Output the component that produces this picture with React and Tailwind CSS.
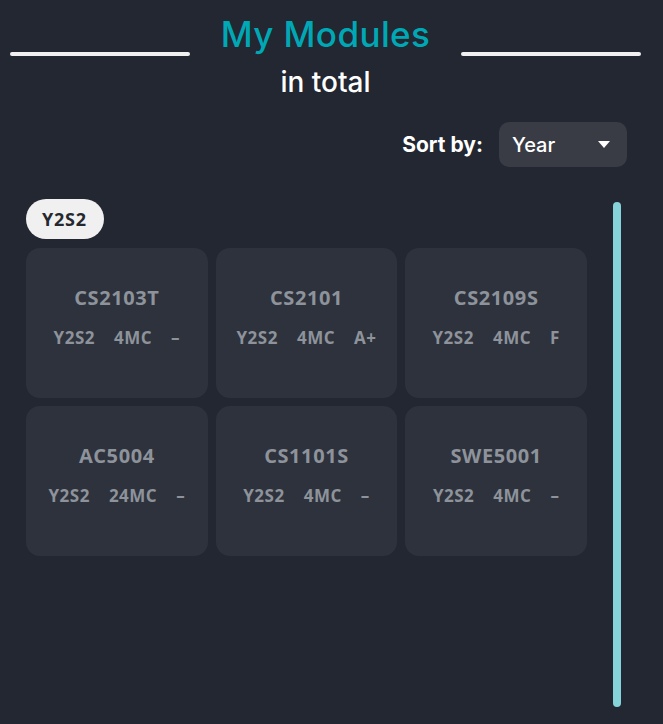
import React from "react";

const mods = [
  { code: "CS2103T", mc: "4MC", grade: "–" },
  { code: "CS2101", mc: "4MC", grade: "A+" },
  { code: "CS2109S", mc: "4MC", grade: "F" },
  { code: "AC5004", mc: "24MC", grade: "–" },
  { code: "CS1101S", mc: "4MC", grade: "–" },
  { code: "SWE5001", mc: "4MC", grade: "–" },
];

export default function App() {
  return (
    <div className="w-[663px] h-[724px] bg-[#222731] overflow-hidden" style={{ fontFamily: "Inter, 'Noto Sans', sans-serif" }}>
      <div className="w-[651px]">
        <div className="flex items-start px-[10px] pt-[12px]">
          <div className="flex-1 h-[4px] rounded-full bg-[#f0f0f0] mt-[40px]" />
          <h1 className="mx-[31px] text-[35px] leading-[44px] font-medium tracking-[0.4px] text-[#00a8b5]">My Modules</h1>
          <div className="flex-1 h-[4px] rounded-full bg-[#f0f0f0] mt-[40px]" />
        </div>
        <div className="text-center text-white text-[28px] leading-[34px] mt-[9px] font-medium">in total</div>
        <div className="flex justify-end items-center pr-[24px] mt-[23px] gap-[16px]">
          <span className="text-white text-[21px] font-bold">Sort by:</span>
          <div className="w-[128px] h-[45px] rounded-[10px] bg-[#393c45] flex items-center justify-between pl-[13px] pr-[17px]">
            <span className="text-white text-[20px] font-medium">Year</span>
            <svg width="12" height="7" viewBox="0 0 12 7"><path d="M0 0 L12 0 L6 7 Z" fill="#ffffff" /></svg>
          </div>
        </div>
      </div>
      <div className="flex pl-[26px] mt-[32px]">
        <div className="w-[561px]">
          <div className="inline-flex items-center h-[40px] pl-[16px] pr-[17px] rounded-full bg-[#f0f0f0] text-[#25282e] text-[18px] tracking-[0.8px] font-bold" style={{ fontFamily: "'Open Sans', sans-serif" }}>Y2S2</div>
          <div className="grid grid-cols-3 gap-x-[8px] gap-y-[8px] mt-[9px]" style={{ fontFamily: "'Open Sans', sans-serif" }}>
            {mods.map((m) => (
              <div key={m.code} className="h-[150px] rounded-[14px] bg-[#2d323c] flex flex-col items-center pt-[37px] text-[#8e939b]">
                <div className="text-[20px] font-bold leading-[26px] tracking-[0.6px]">{m.code}</div>
                <div className="flex gap-[19px] text-[17px] font-bold mt-[16px] leading-[22px] tracking-[0.5px]">
                  <span>Y2S2</span>
                  <span>{m.mc}</span>
                  <span>{m.grade}</span>
                </div>
              </div>
            ))}
          </div>
        </div>
        <div className="ml-[26px] w-[8px] h-[505px] rounded-full bg-[#86d4d9] mt-[3px]" />
      </div>
    </div>
  );
}
